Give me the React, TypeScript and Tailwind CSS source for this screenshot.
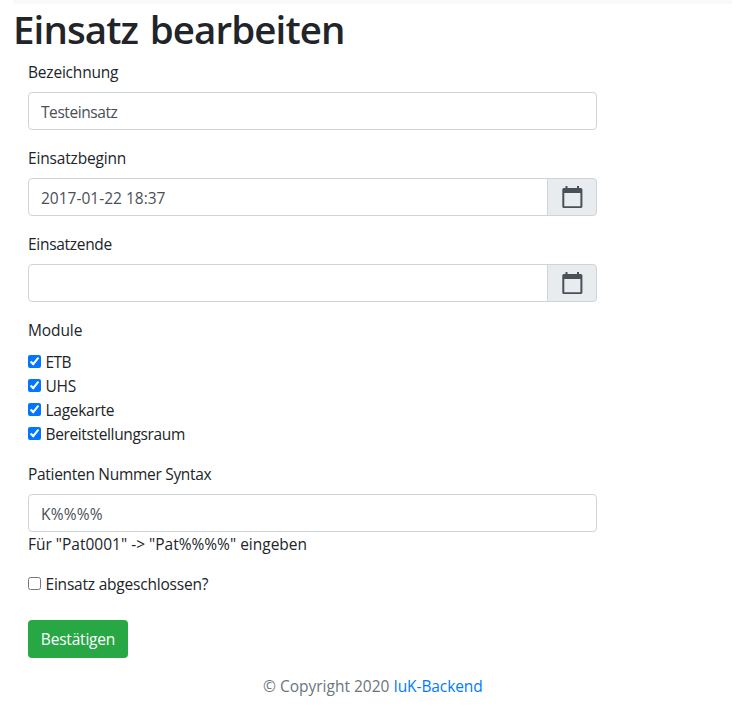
import React from 'react';

const field =
  'block h-[38px] w-full min-w-0 border border-[#ced4da] bg-white px-3 pt-2 pb-1.5 text-[#495057] outline-none';

function CalendarIcon() {
  return (
    <svg width="22" height="24" viewBox="0 0 22 24" fill="#495057" aria-hidden="true">
      <path
        fillRule="evenodd"
        d="M4.500 1h2v2h9.500V1h2v2h1.800A1.600 1.600 0 0 1 21.400 4.600V21.400A1.600 1.600 0 0 1 19.800 23H2.900A1.600 1.600 0 0 1 1.300 21.400V4.600A1.600 1.600 0 0 1 2.900 3H4.500V1ZM3.300 8v13.200h16.100V8H3.300Z"
      />
    </svg>
  );
}

function DateField({ label, value, tracking }: { label: string; value: string; tracking: string }) {
  return (
    <div className="mb-4">
      <label className={`mb-2 block ${tracking}`}>{label}</label>
      <div className="flex">
        <input className={`${field} flex-1 rounded-l`} defaultValue={value} />
        <button className="-ml-px flex w-[50px] shrink-0 items-center justify-center rounded-r border border-[#ced4da] bg-[#e9ecef]">
          <CalendarIcon />
        </button>
      </div>
    </div>
  );
}

function Check({ label, checked, tracking }: { label: string; checked?: boolean; tracking: string }) {
  return (
    <label className={`flex h-6 items-start ${tracking}`}>
      <input type="checkbox" defaultChecked={checked} className="mt-[5px] mr-[4.5px] size-[13px] shrink-0 accent-[#0075ff]" />
      <span>{label}</span>
    </label>
  );
}

export default function App() {
  return (
    <div className="h-[706px] overflow-hidden bg-white font-['Open_Sans',sans-serif] text-[15.5px] leading-6 text-[#212529]">
      <div className="mr-[3px] ml-[13px] h-1 bg-[#f8f9fa]" />
      <h1 className="mb-[7px] ml-[13px] pt-px text-[38.5px] leading-[48px] font-semibold tracking-[-0.9px] [word-spacing:2.5px] whitespace-nowrap">
        Einsatz bearbeiten
      </h1>
      <form className="ml-7 w-[569px]" onSubmit={(e) => e.preventDefault()}>
        <div className="mb-4">
          <label className="mb-2 block tracking-[-0.2px]">Bezeichnung</label>
          <input className={`${field} rounded tracking-[-0.43px]`} defaultValue="Testeinsatz" />
        </div>
        <DateField label="Einsatzbeginn" value="2017-01-22 18:37" tracking="tracking-[-0.17px]" />
        <DateField label="Einsatzende" value="" tracking="tracking-[-0.3px]" />
        <div className="mb-4">
          <div className="mb-2 tracking-[-0.1px]">Module</div>
          <Check label="ETB" checked tracking="tracking-[-0.6px]" />
          <Check label="UHS" checked tracking="tracking-[-0.2px]" />
          <Check label="Lagekarte" checked tracking="tracking-[-0.27px]" />
          <Check label="Bereitstellungsraum" checked tracking="tracking-[-0.36px]" />
        </div>
        <div className="mb-4">
          <label className="mb-2 block tracking-[-0.3px]">Patienten Nummer Syntax</label>
          <input className={`${field} rounded tracking-[0.2px]`} defaultValue="K%%%%" />
          <div>Für "Pat0001" -&gt; "Pat%%%%" eingeben</div>
        </div>
        <Check label="Einsatz abgeschlossen?" tracking="tracking-[-0.21px]" />
        <button className="mt-6 flex h-[38px] w-[100px] items-center justify-center rounded bg-[#28a745] tracking-[-0.2px] text-white">
          Bestätigen
        </button>
      </form>
      <footer className="mt-4 ml-[263px] whitespace-nowrap text-[#6c757d]">
        © Copyright 2020 <a className="tracking-[-0.1px] text-[#007bff]">IuK-Backend</a>
      </footer>
    </div>
  );
}
